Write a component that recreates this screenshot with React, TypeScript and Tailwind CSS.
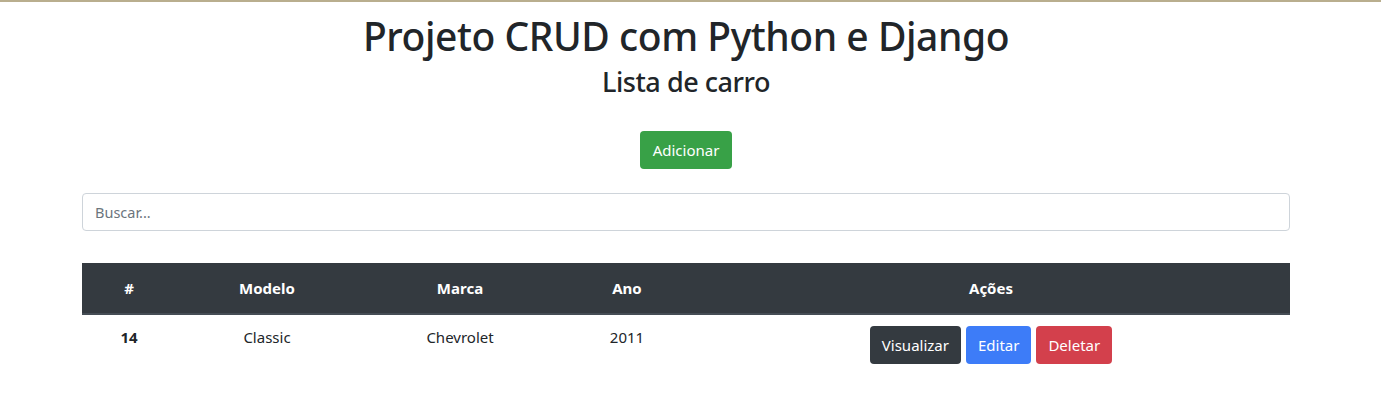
export default function App() {
  const font = { fontFamily: '"Noto Sans", "Open Sans", sans-serif' };
  return (
    <div className="min-h-[409px] w-[1372px] bg-white text-[#212529]" style={font}>
      <div className="h-[2px] w-[1381px] bg-[#b9ae8e]" />
      <div className="mx-auto w-[1208px]">
        <h1 className="mt-[10px] text-center text-[39px] font-medium leading-[48px] tracking-[-0.45px]">Projeto CRUD com Python e Django</h1>
        <h3 className="mt-[5px] text-center text-[27px] font-medium leading-[34px] tracking-[-0.45px]">Lista de carro</h3>
        <div className="mt-[32px] flex justify-center">
          <button className="h-[38px] rounded-[4px] bg-[#38a147] px-[13px] text-[15px] text-white">Adicionar</button>
        </div>
        <input
          className="mt-[24px] h-[38px] w-full rounded-[4px] border border-[#ced4da] px-[12px] text-[14.5px] placeholder:text-[#6c757d] outline-none"
          placeholder="Buscar..."
        />
        <table className="mt-[32px] w-full border-collapse text-center text-[15px]">
          <thead>
            <tr className="h-[51px] border-b-2 border-[#454d55] bg-[#343a40] text-white">
              <th className="w-[94px] font-bold">#</th>
              <th className="w-[182px] font-bold">Modelo</th>
              <th className="w-[204px] font-bold">Marca</th>
              <th className="w-[130px] font-bold">Ano</th>
              <th className="font-bold">Ações</th>
            </tr>
          </thead>
          <tbody>
            <tr className="h-[49px]">
              <td className="font-bold align-top pt-[11px]">14</td>
              <td className="align-top pt-[11px]">Classic</td>
              <td className="align-top pt-[11px]">Chevrolet</td>
              <td className="align-top pt-[11px]">2011</td>
              <td className="pt-[11px] pb-[12px]">
                <div className="flex justify-center gap-[5px]">
                  <button className="h-[38px] rounded-[4px] bg-[#343a40] px-[12px] text-white">Visualizar</button>
                  <button className="h-[38px] rounded-[4px] bg-[#3d7cf8] px-[12px] text-white">Editar</button>
                  <button className="h-[38px] rounded-[4px] bg-[#d3404c] px-[12px] text-white">Deletar</button>
                </div>
              </td>
            </tr>
          </tbody>
        </table>
      </div>
    </div>
  );
}
